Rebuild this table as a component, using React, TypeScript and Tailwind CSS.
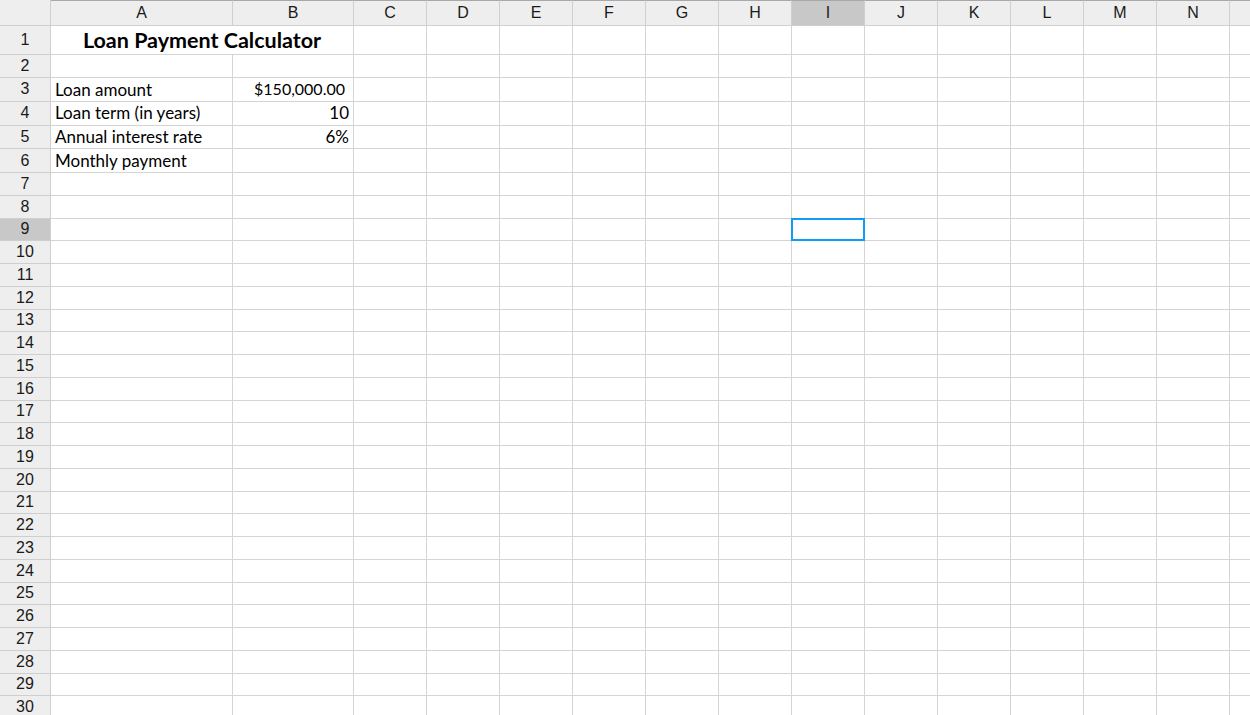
import React from "react";

const cols = [
  { name: "A", w: "w-[182px]" },
  { name: "B", w: "w-[121px]" },
  { name: "C", w: "w-[73px]" },
  { name: "D", w: "w-[73px]" },
  { name: "E", w: "w-[73px]" },
  { name: "F", w: "w-[73px]" },
  { name: "G", w: "w-[73px]" },
  { name: "H", w: "w-[73px]" },
  { name: "I", w: "w-[73px]" },
  { name: "J", w: "w-[73px]" },
  { name: "K", w: "w-[73px]" },
  { name: "L", w: "w-[73px]" },
  { name: "M", w: "w-[73px]" },
  { name: "N", w: "w-[73px]" },
  { name: "O", w: "w-[73px]" },
];

const header = "font-['Liberation_Sans',Arial,sans-serif] text-[16px] text-[#1a1a1a]";
const cellFont = "font-['Lato',sans-serif] text-black";

function rowHeight(r: number) {
  if (r === 1) return "h-[29px]";
  if (r === 2) return "h-[23px]";
  if (r >= 3 && r <= 6) return "h-[23.75px]";
  return "h-[22.75px]";
}

const content: Record<number, { a?: string; b?: string; bPad?: string }> = {
  3: { a: "Loan amount", b: "$150,000.00", bPad: "pr-[8px] text-[16px]" },
  4: { a: "Loan term (in years)", b: "10", bPad: "pr-[4px] text-[17px]" },
  5: { a: "Annual interest rate", b: "6%", bPad: "pr-[4px] text-[17px]" },
  6: { a: "Monthly payment" },
};

function Row({ r }: { r: number }) {
  const h = rowHeight(r);
  const sel = r === 9;
  const c = content[r];
  return (
    <div className={`flex shrink-0 ${h}`}>
      <div
        className={`w-[51px] shrink-0 flex items-center justify-center border-r border-b border-[#cfcfcf] ${header} ${
          sel ? "bg-[#c8c8c8]" : "bg-[#eeeeee]"
        }`}
      >
        {r}
      </div>
      {r === 1 ? (
        <div className="w-[303px] shrink-0 flex items-center justify-center border-r border-b border-[#d4d4d4] font-['Lato',sans-serif] text-[21.5px] font-bold text-black">
          Loan Payment Calculator
        </div>
      ) : (
        <>
          <div
            className={`${cols[0].w} shrink-0 flex items-center pl-[4px] border-r border-b border-[#d4d4d4] text-[17px] ${cellFont}`}
          >
            {c?.a}
          </div>
          <div
            className={`${cols[1].w} shrink-0 flex items-center justify-end border-r border-b border-[#d4d4d4] ${cellFont} ${c?.bPad ?? ""}`}
          >
            {c?.b}
          </div>
        </>
      )}
      {cols.slice(2).map((col) => (
        <div key={col.name} className={`${col.w} shrink-0 border-r border-b border-[#d4d4d4] relative`}>
          {sel && col.name === "I" && (
            <div className="absolute left-[-1px] top-[-1px] right-[-1px] bottom-[-1px] border-2 border-[#0f9cf2]" />
          )}
        </div>
      ))}
    </div>
  );
}

export default function App() {
  const rows = Array.from({ length: 30 }, (_, i) => i + 1);
  return (
    <div className="w-[1250px] h-[715px] overflow-hidden bg-white">
      <div className="flex h-[26px] shrink-0">
        <div className="w-[51px] shrink-0 bg-[#eeeeee] border-r border-b border-[#cfcfcf]" />
        {cols.map((col) => (
          <div
            key={col.name}
            className={`${col.w} shrink-0 flex items-center justify-center border-t border-t-[#a8a8a8] border-r border-b border-[#cfcfcf] ${header} ${
              col.name === "I" ? "bg-[#c8c8c8]" : "bg-[#eeeeee]"
            }`}
          >
            {col.name === "O" ? "" : col.name}
          </div>
        ))}
      </div>
      {rows.map((r) => (
        <Row key={r} r={r} />
      ))}
    </div>
  );
}
